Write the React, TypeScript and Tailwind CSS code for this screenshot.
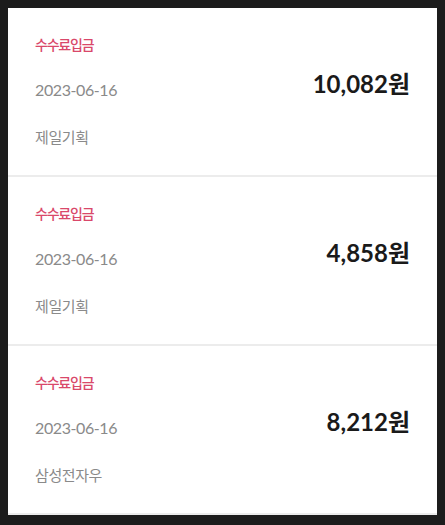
import React from "react";

const items = [
  { date: "2023-06-16", amount: "10,082원", name: "제일기획" },
  { date: "2023-06-16", amount: "4,858원", name: "제일기획" },
  { date: "2023-06-16", amount: "8,212원", name: "삼성전자우" },
];

export default function App() {
  return (
    <div
      className="w-[445px] h-[525px] bg-[#1c1c1c] p-2"
      style={{ fontFamily: 'Lato, "Noto Sans CJK KR", sans-serif' }}
    >
      <div className="bg-white w-[429px] flex flex-col">
        {items.map((it, i) => (
          <div
            key={i}
            className="h-[169px] border-b-2 border-[#ececec] px-[27px] pt-[27px] flex flex-col"
          >
            <div className="text-[14px] leading-[20px] font-medium tracking-[-1.2px] text-[#d9486a]">
              수수료입금
            </div>
            <div className="flex items-center justify-between mt-[24px]">
              <div className="text-[16px] leading-[22px] tracking-[-0.4px] text-[#8a8a8a]">
                {it.date}
              </div>
              <div className="text-[24px] leading-[30px] font-bold text-[#1a1a1a] mt-[-12px]">
                {it.amount}
              </div>
            </div>
            <div className="text-[15px] leading-[20px] tracking-[-0.4px] text-[#8a8a8a] mt-[26px]">
              {it.name}
            </div>
          </div>
        ))}
      </div>
    </div>
  );
}
